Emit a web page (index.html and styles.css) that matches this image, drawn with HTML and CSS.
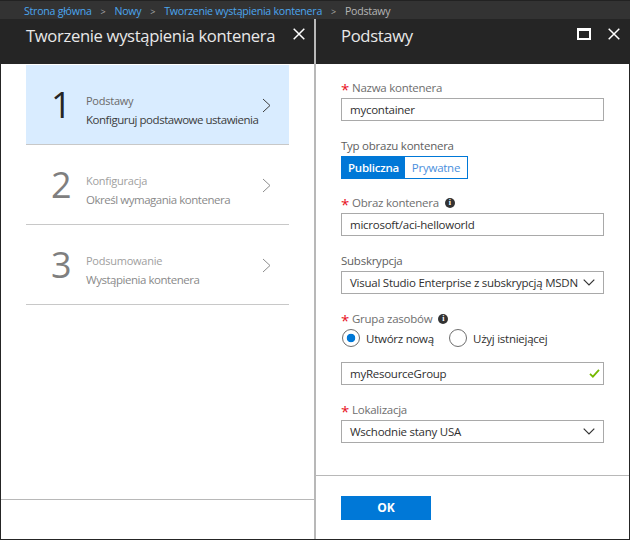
FILE: index.html
```html
<!DOCTYPE html>
<html lang="pl">
<head>
<meta charset="utf-8">
<title>Podstawy</title>
<link rel="stylesheet" href="styles.css">
</head>
<body>
<nav class="crumbs">
  <a class="crumb">Strona główna</a><span class="sep">&gt;</span>
  <a class="crumb">Nowy</a><span class="sep">&gt;</span>
  <a class="crumb">Tworzenie wystąpienia kontenera</a><span class="sep">&gt;</span>
  <span class="crumb-current">Podstawy</span>
</nav>
<main class="blades">
  <section class="blade blade-left">
    <header class="blade-head">
      <h1 class="blade-title">Tworzenie wystąpienia kontenera</h1>
      <div class="head-icons">
        <svg class="icon-close" viewBox="0 0 12 12"><path d="M.7.7l10.6 10.6M11.3.7L.7 11.3"/></svg>
      </div>
    </header>
    <div class="blade-body steps">
      <div class="step step-active">
        <div class="step-num">1</div>
        <div class="step-text"><div class="step-name">Podstawy</div><div class="step-desc">Konfiguruj podstawowe ustawienia</div></div>
        <svg class="chev" viewBox="0 0 9 15"><path d="M1 1l7 6.5L1 14"/></svg>
      </div>
      <div class="step">
        <div class="step-num">2</div>
        <div class="step-text"><div class="step-name">Konfiguracja</div><div class="step-desc">Określ wymagania kontenera</div></div>
        <svg class="chev" viewBox="0 0 9 15"><path d="M1 1l7 6.5L1 14"/></svg>
      </div>
      <div class="step">
        <div class="step-num">3</div>
        <div class="step-text"><div class="step-name">Podsumowanie</div><div class="step-desc">Wystąpienia kontenera</div></div>
        <svg class="chev" viewBox="0 0 9 15"><path d="M1 1l7 6.5L1 14"/></svg>
      </div>
    </div>
    <footer class="blade-foot foot-left"></footer>
  </section>
  <section class="blade blade-right">
    <header class="blade-head">
      <h1 class="blade-title">Podstawy</h1>
      <div class="head-icons">
        <span class="icon-max"></span>
        <svg class="icon-close" viewBox="0 0 12 12"><path d="M.7.7l10.6 10.6M11.3.7L.7 11.3"/></svg>
      </div>
    </header>
    <form class="blade-body form">
      <div class="field f-name">
        <div class="label"><span class="req">*</span>Nazwa kontenera</div>
        <div class="input">mycontainer</div>
      </div>
      <div class="field f-type">
        <div class="label label-plain">Typ obrazu kontenera</div>
        <div class="toggle"><span class="tog tog-on">Publiczna</span><span class="tog tog-off">Prywatne</span></div>
      </div>
      <div class="field f-image">
        <div class="label"><span class="req">*</span>Obraz kontenera<span class="info">i</span></div>
        <div class="input">microsoft/aci-helloworld</div>
      </div>
      <div class="field f-sub">
        <div class="label label-plain">Subskrypcja</div>
        <div class="input select"><span>Visual Studio Enterprise z subskrypcją MSDN</span>
          <svg class="caret" viewBox="0 0 12 7"><path d="M.7.7L6 6l5.3-5.3"/></svg></div>
      </div>
      <div class="field f-group">
        <div class="label"><span class="req">*</span>Grupa zasobów<span class="info">i</span></div>
        <div class="radios">
          <span class="radio radio-on"></span><span class="radio-label">Utwórz nową</span>
          <span class="radio"></span><span class="radio-label">Użyj istniejącej</span>
        </div>
        <div class="input select group-input"><span>myResourceGroup</span>
          <svg class="check" viewBox="0 0 12 10"><path d="M1 5.5l3.2 3L11 1"/></svg></div>
      </div>
      <div class="field f-loc">
        <div class="label"><span class="req">*</span>Lokalizacja</div>
        <div class="input select"><span>Wschodnie stany USA</span>
          <svg class="caret" viewBox="0 0 12 7"><path d="M.7.7L6 6l5.3-5.3"/></svg></div>
      </div>
    </form>
    <footer class="blade-foot foot-right"><button class="ok" type="button">OK</button></footer>
  </section>
</main>
</body>
</html>
```
FILE: styles.css
```css
* { box-sizing: border-box; }
html, body { margin: 0; height: 100%; }
body {
  width: 630px;
  height: 540px;
  overflow: hidden;
  background: #252525;
  font-family: "Open Sans", "Noto Sans", sans-serif;
  font-size: 11.5px;
  letter-spacing: -0.25px;
  display: flex;
  flex-direction: column;
}
.crumbs {
  height: 19px;
  flex: none;
  background: #333333;
  border-top: 1px solid #222;
  padding: 2px 0 0 24px;
  display: flex;
  align-items: center;
  font-size: 10.6px;
  color: #b9b9b9;
}
.crumb { color: #4ba6ef; }
.sep { margin: 0 9px 0 9px; color: #aaa; font-size: 9px; }
.crumb-current { color: #b5b5b5; }
.blades {
  flex: 1;
  display: flex;
  padding: 0 1px 1px 1px;
  min-height: 0;
}
.blade { display: flex; flex-direction: column; height: 100%; background: #fff; }
.blade-left { width: 313px; }
.blade-right { width: 315px; border-left: 2px solid #b8b8b8; }
.blade-head {
  height: 45px;
  flex: none;
  background: #252525;
  display: flex;
  justify-content: space-between;
  color: #e8e8e8;
}
.blade-left .blade-head { padding: 0 9px 0 25px; }
.blade-right .blade-head { padding: 0 9px 0 25px; }
.blade-title {
  margin: 0;
  font-size: 16.65px;
  font-weight: 400;
  line-height: 33px;
  letter-spacing: -0.35px;
}
.head-icons { display: flex; align-items: flex-start; gap: 17px; padding-top: 9px; }
.icon-close { width: 12px; height: 12px; fill: none; stroke: #fff; stroke-width: 1.5; }
.icon-max { width: 14px; height: 12px; border: 2px solid #fff; border-top-width: 3px; }
.blade-body { flex: 1; min-height: 0; }
.steps { padding: 1px 25px 0; }
.step {
  height: 80px;
  border-bottom: 1px solid #c8c8c8;
  display: flex;
  align-items: center;
  position: relative;
  color: #8a8a8a;
}
.step-active { background: #d9ecff; color: #3c3c3c; }
.step-num {
  width: 60px;
  padding-left: 25px;
  font-size: 36px;
  line-height: 1;
  color: #7f7f7f;
  letter-spacing: 0;
}
.step-active .step-num { color: #252525; }
.step-text { line-height: 19px; padding-top: 10px; }
.step-name { font-size: 11px; color: #a0a0a0; }
.step-active .step-name { color: #6a6a6a; }
.step-desc { font-size: 11.5px; letter-spacing: -0.47px; }
.chev {
  position: absolute;
  right: 18px;
  top: 33px;
  width: 9px;
  height: 15px;
  fill: none;
  stroke: #8c8c8c;
  stroke-width: 1;
}
.step-active .chev { stroke: #3c3c3c; }
.blade-foot { flex: none; border-top: 1px solid #b8b8b8; }
.foot-left { height: 40px; }
.foot-right { height: 64px; padding: 20px 0 0 25px; }
.form { padding-left: 25px; }
.field { width: 263px; }
.f-name { padding-top: 16px; }
.f-type { padding-top: 17px; }
.f-image { padding-top: 16px; }
.f-sub { padding-top: 17px; }
.f-group { padding-top: 17px; }
.f-loc { padding-top: 17px; }
.label {
  height: 18px;
  padding-bottom: 2px;
  line-height: 16px;
  color: #6e6e6e;
  display: flex;
  align-items: center;
  white-space: nowrap;
}
.label-plain { color: #5e5e5e; }
.req {
  color: #e81123;
  width: 11px;
  font-size: 15px;
  line-height: 13px;
  height: 11px;
  letter-spacing: 0;
}
.info {
  width: 10px;
  height: 10px;
  border-radius: 50%;
  background: #333;
  color: #fff;
  font: bold 8px/10px "Liberation Serif", serif;
  text-align: center;
  margin-left: 6px;
  letter-spacing: 0;
}
.input {
  height: 23px;
  border: 1px solid #a9a9a9;
  padding-left: 8px;
  line-height: 21px;
  color: #303030;
  background: #fff;
}
.select {
  display: flex;
  justify-content: space-between;
  align-items: center;
  padding-right: 8px;
  white-space: nowrap;
}
.caret { width: 12px; height: 7px; flex: none; fill: none; stroke: #333; stroke-width: 1.2; }
.check { width: 11px; height: 9px; flex: none; margin-right: -5px; fill: none; stroke: #76b900; stroke-width: 2; }
.toggle { display: flex; height: 23px; width: 127px; border: 1px solid #0078d7; }
.tog { display: flex; align-items: center; justify-content: center; }
.tog-on { width: 63px; background: #0078d7; color: #fff; font-weight: 600; }
.tog-off { flex: 1; color: #4b8fdd; }
.radios { display: flex; align-items: center; height: 20px; color: #303030; margin-top: -1px; }
.radio {
  width: 18px;
  height: 18px;
  border: 1px solid #6e6e6e;
  border-radius: 50%;
  margin-left: 1px;
  flex: none;
  background: #fff;
}
.radio-on {
  background: radial-gradient(circle, #0078d7 0 4px, transparent 4.6px);
}
.radio-label { margin-left: 6px; }
.radio-label:nth-child(2) { width: 82px; }
.group-input { margin-top: 14px; }
.ok {
  display: block;
  width: 90px;
  height: 24px;
  border: 0;
  padding: 0;
  background: #0078d7;
  color: #fff;
  font: 700 12px/24px "Open Sans", sans-serif;
}
```
